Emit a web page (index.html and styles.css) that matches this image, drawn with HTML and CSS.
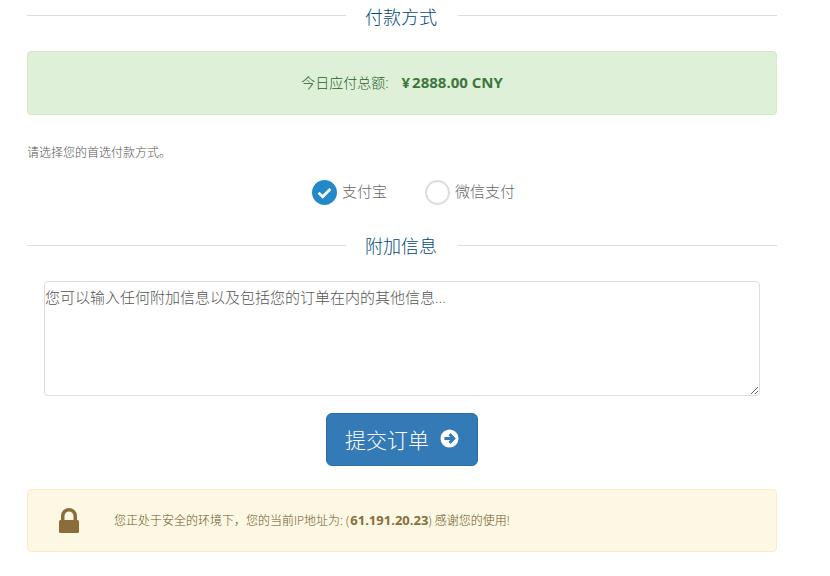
FILE: index.html
```html
<!DOCTYPE html>
<html lang="zh-CN">
<head>
<meta charset="utf-8">
<title>付款方式</title>
<link rel="stylesheet" href="styles.css">
</head>
<body>
<main class="page">
  <h2 class="sub-heading first"><span>付款方式</span></h2>
  <div class="total-box">
    <span class="total-label">今日应付总额:</span>
    <strong class="total-amount"><span class="currency">¥</span>2888.00 CNY</strong>
  </div>
  <p class="hint">请选择您的首选付款方式。</p>
  <div class="gateways">
    <label class="gateway">
      <span class="radio checked">
        <svg viewBox="0 0 16 16" width="17" height="17"><path d="M2.5 8.3 L6.3 12 L13.5 4.8" fill="none" stroke="#fff" stroke-width="2.6"/></svg>
      </span>
      <span class="gateway-name">支付宝</span>
    </label>
    <label class="gateway">
      <span class="radio"></span>
      <span class="gateway-name">微信支付</span>
    </label>
  </div>
  <h2 class="sub-heading"><span>附加信息</span></h2>
  <div class="notes-wrap">
    <textarea class="notes" placeholder="您可以输入任何附加信息以及包括您的订单在内的其他信息..."></textarea>
  </div>
  <div class="submit-row">
    <button class="submit" type="button">提交订单
      <svg class="submit-icon" viewBox="0 0 20 20" width="19" height="19"><circle cx="10" cy="10" r="9.5" fill="#fff"/><path d="M4.6 10 H14 M10 5.4 L14.6 10 L10 14.6" fill="none" stroke="#337ab7" stroke-width="3"/></svg>
    </button>
  </div>
  <div class="secure">
    <svg class="lock" viewBox="0 0 20 25" width="20" height="25"><path d="M3.75 13 V8 a6.25 6.25 0 0 1 12.5 0 V13" fill="none" stroke="#8a6d3b" stroke-width="3.5"/><rect x="0" y="12" width="20" height="13" rx="1.5" fill="#8a6d3b"/></svg>
    <p class="secure-text">您正处于安全的环境下，您的当前IP地址为: (<strong>61.191.20.23</strong>) 感谢您的使用!</p>
  </div>
</main>
</body>
</html>
```
FILE: styles.css
```css
* { box-sizing: border-box; }
html, body { margin: 0; padding: 0; background: #fff; }
body {
  font-family: "Open Sans", "Noto Sans CJK SC", sans-serif;
  font-size: 13px;
  color: #777;
  height: 576px;
  overflow: hidden;
}
.page { width: 750px; margin-left: 27px; }
.sub-heading {
  display: flex;
  align-items: center;
  margin: 24px 0 0;
  height: 36px;
  font-size: 18px;
  font-weight: 300;
  color: #004a80;
}
.sub-heading::before, .sub-heading::after {
  content: "";
  flex: 1;
  border-top: 1px solid #ddd;
  margin-top: -4px;
}
.sub-heading span { padding: 0 20px; line-height: 24px; margin-bottom: 2px; margin-left: -1px; margin-right: 1px; }
.sub-heading.first { margin-top: 0; height: 35px; }
.total-box {
  margin-top: 16px;
  height: 64px;
  padding-bottom: 2px;
  background: #dff0d8;
  border: 1px solid #d6e9c6;
  border-radius: 4px;
  color: #3c763d;
  display: flex;
  align-items: center;
  justify-content: center;
}
.total-label { font-size: 14px; font-weight: 300; color: #2a5f2b; }
.total-amount { font-size: 15px; margin-left: 13px; }
.currency { margin-right: 2px; }
.hint { margin: 29px 0 0; font-size: 12px; line-height: 17px; color: #555; font-weight: 300; }
.gateways {
  display: flex;
  justify-content: center;
  gap: 38px;
  margin-top: 19px;
  padding-left: 23px;
  font-size: 15px;
  color: #666;
}
.gateway { display: flex; align-items: center; gap: 5px; }
.gateway-name { margin-bottom: 4px; font-weight: 300; }
.radio {
  width: 25px;
  height: 25px;
  border-radius: 50%;
  border: 2px solid #ddd;
  display: flex;
  align-items: center;
  justify-content: center;
}
.radio.checked { background: #2389c8; border-color: #2389c8; }
.notes-wrap { padding: 0 17px; margin-top: 16px; }
.notes {
  display: block;
  width: 716px;
  height: 115px;
  border: 1px solid #ddd;
  border-radius: 4px;
  padding: 5px 0;
  font: 300 15px/20px "Open Sans", "Noto Sans CJK SC", sans-serif;
  color: #777;
  resize: vertical;
  outline: none;
}
.notes::placeholder { color: #555; opacity: 1; }
.submit-row { display: flex; justify-content: center; margin-top: 17px; }
.submit {
  display: flex;
  align-items: center;
  gap: 11px;
  height: 53px;
  padding: 0 18px 2px;
  background: #337ab7;
  border: 1px solid #2e6da4;
  border-radius: 6px;
  color: #fff;
  font: 300 21px "Open Sans", "Noto Sans CJK SC", sans-serif;
}
.secure {
  margin-top: 23px;
  height: 63px;
  background: #fcf8e3;
  border: 1px solid #faebcc;
  border-radius: 4px;
  display: flex;
  align-items: center;
  color: #6e5427;
}
.lock { margin-left: 31px; }
.secure-text { margin: 0 0 0 35px; font-size: 12px; line-height: 17px; font-weight: 300; }
.secure-text strong { font-size: 13px; font-weight: 700; margin-left: 1px; color: #8a6d3b; }
```
